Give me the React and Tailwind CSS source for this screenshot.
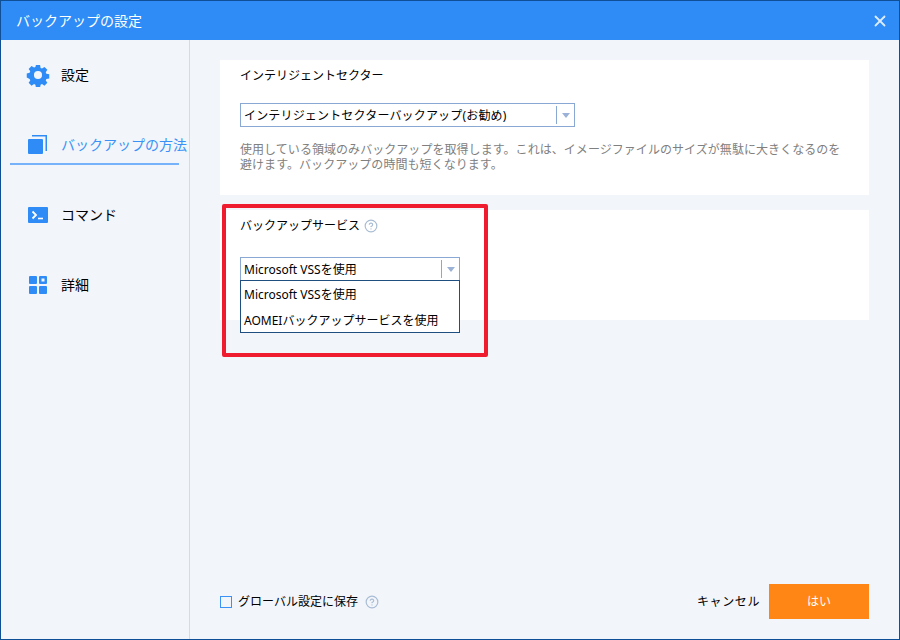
import React from "react";
import { CircleHelp, X } from "lucide-react";

function GearIcon() {
  return (
    <svg width="24" height="24" viewBox="0 0 24 24" className="text-[#2f8cf6]">
      <path
        fill="currentColor"
        fillRule="evenodd"
        d="M9.7 1h4.6l.6 3.2 1.5.7 2.8-1.8 3.2 3.2-1.8 2.7.7 1.6 3.2.7v4.5l-3.2.6-.7 1.6 1.8 2.7-3.2 3.2-2.8-1.8-1.5.7-.6 3.2H9.7l-.6-3.2-1.5-.7-2.8 1.8-3.2-3.2 1.8-2.7-.7-1.6L-.5 14.7V10.200l3.200-.7.7-1.600-1.800-2.700 3.200-3.200 2.800 1.800 1.500-.7zM12 7.500a4.500 4.500 0 1 0 0 9 4.500 4.500 0 0 0 0-9z"
        transform="translate(1.200 1.200) scale(.9)"
      />
    </svg>
  );
}

function CopyIcon() {
  return (
    <svg width="20" height="20" viewBox="0 0 20 20" className="text-[#2f8cf6]">
      <rect x="0" y="4" width="15" height="15" rx="1" fill="currentColor" />
      <path d="M4 .75h14.250V16" fill="none" stroke="currentColor" strokeWidth="1.500" />
    </svg>
  );
}

function TerminalIcon() {
  return (
    <svg width="20" height="16" viewBox="0 0 20 16" className="text-[#2f8cf6]">
      <rect width="20" height="16" rx="1" fill="currentColor" />
      <path d="M4.500 4.500 8 8l-3.500 3.500" fill="none" stroke="#fff" strokeWidth="1.800" />
      <path d="M10 11.500h5" stroke="#fff" strokeWidth="1.600" />
    </svg>
  );
}

function GridIcon() {
  return (
    <svg width="18" height="18" viewBox="0 0 18 18" className="text-[#2f8cf6]">
      <rect width="8" height="8" rx="1" fill="currentColor" />
      <rect x="10" width="8" height="8" rx="1" fill="currentColor" />
      <rect x="12.500" y="2.500" width="3" height="3" fill="#f2f5fa" />
      <rect y="10" width="8" height="8" rx="1" fill="currentColor" />
      <rect x="10" y="10" width="8" height="8" rx="1" fill="currentColor" />
    </svg>
  );
}

function NavItem({ icon, label, active = false }) {
  return (
    <div className="h-[70px] flex items-center">
      <div
        className={`w-[169px] ml-[9px] h-[40px] flex items-center ${
          active ? "border-b-2 border-[#75b2f9] pt-[2px] text-[#3a92f6]" : "text-black"
        }`}
      >
        <div className="w-[24px] ml-[16px] flex justify-center shrink-0">{icon}</div>
        <span className="text-sm ml-[11px] whitespace-nowrap">{label}</span>
      </div>
    </div>
  );
}

function SelectBox({ label, width, spaced = false }) {
  return (
    <div
      className={`${width} h-[24px] border border-[#8aa8d4] bg-white flex items-center justify-between text-xs text-black`}
    >
      <span className={`pl-[3px] pt-[2px] whitespace-nowrap ${spaced ? "tracking-[0.17px]" : ""}`}>{label}</span>
      <div className="h-[18px] w-[18px] border-l border-[#8aa8d4] flex items-center justify-center">
        <div className="w-0 h-0 border-x-[4px] border-x-transparent border-t-[5px] border-t-[#9bb2d6]" />
      </div>
    </div>
  );
}

export default function App() {
  return (
    <div className="w-[900px] h-[640px] relative overflow-hidden flex flex-col border border-[#0f4f95] bg-[#f2f5fa] font-['Noto_Sans','Noto_Sans_CJK_JP',sans-serif]">
      <header className="h-[39px] shrink-0 bg-[#2f8cf6] flex items-center justify-between pl-[15px] pr-[10px] text-white">
        <span className="text-sm">バックアップの設定</span>
        <X size={18} strokeWidth={2.4} className="text-[#dcecff]" />
      </header>

      <div className="flex-1 flex min-h-0">
        <nav className="w-[189px] shrink-0 border-r border-[#d5dbe3]">
          <NavItem icon={<GearIcon />} label="設定" />
          <NavItem icon={<CopyIcon />} label="バックアップの方法" active />
          <NavItem icon={<TerminalIcon />} label="コマンド" />
          <NavItem icon={<GridIcon />} label="詳細" />
        </nav>

        <main className="flex-1 flex flex-col pt-[20px] pl-[30px] pr-[30px] pb-[20px]">
          <section className="h-[135px] bg-white pl-[20px] pt-[7px]">
            <h2 className="text-xs leading-[18px] text-black">インテリジェントセクター</h2>
            <div className="mt-[18px]">
              <SelectBox label="インテリジェントセクターバックアップ(お勧め)" width="w-[335px]" spaced />
            </div>
            <p className="mt-[15px] w-[620px] text-xs leading-[15px] tracking-[0.05px] text-[#808080]">
              使用している領域のみバックアップを取得します。これは、イメージファイルのサイズが無駄に大きくなるのを<br />避けます。バックアップの時間も短くなります。
            </p>
          </section>

          <section className="h-[110px] mt-[15px] bg-white pl-[20px] pt-[7px] relative">
            <h2 className="text-xs leading-[18px] text-black flex items-center gap-[4px]">
              バックアップサービス
              <CircleHelp size={14} className="text-[#a8bcd4]" />
            </h2>
            <div className="mt-[22px]">
              <SelectBox label="Microsoft VSSを使用" width="w-[220px]" />
            </div>
            <ul className="absolute left-[20px] top-[70px] w-[220px] h-[53px] border border-[#1f4e80] bg-white text-xs text-black z-10">
              <li className="h-[26px] pl-[3px] pt-[2px] flex items-center">Microsoft VSSを使用</li>
              <li className="h-[26px] pl-[3px] pt-[2px] flex items-center whitespace-nowrap">AOMEIバックアップサービスを使用</li>
            </ul>
          </section>

          <footer className="mt-auto flex items-center justify-between h-[35px]">
            <div className="flex items-center text-xs text-black">
              <div className="w-[12px] h-[12px] border border-[#3a92f6]" />
              <span className="ml-[6px]">グローバル設定に保存</span>
              <CircleHelp size={14} className="ml-[7px] text-[#a8bcd4]" />
            </div>
            <div className="flex items-center">
              <span className="text-xs text-black mr-[9px] tracking-[0.6px]">キャンセル</span>
              <button className="w-[100px] h-[35px] bg-[#ff8615] text-xs text-white">はい</button>
            </div>
          </footer>
        </main>
      </div>

      <div className="absolute left-[221px] top-[203px] w-[266px] h-[153px] border-4 border-[#ee1c2e] rounded-[2px] z-20 pointer-events-none" />
    </div>
  );
}
